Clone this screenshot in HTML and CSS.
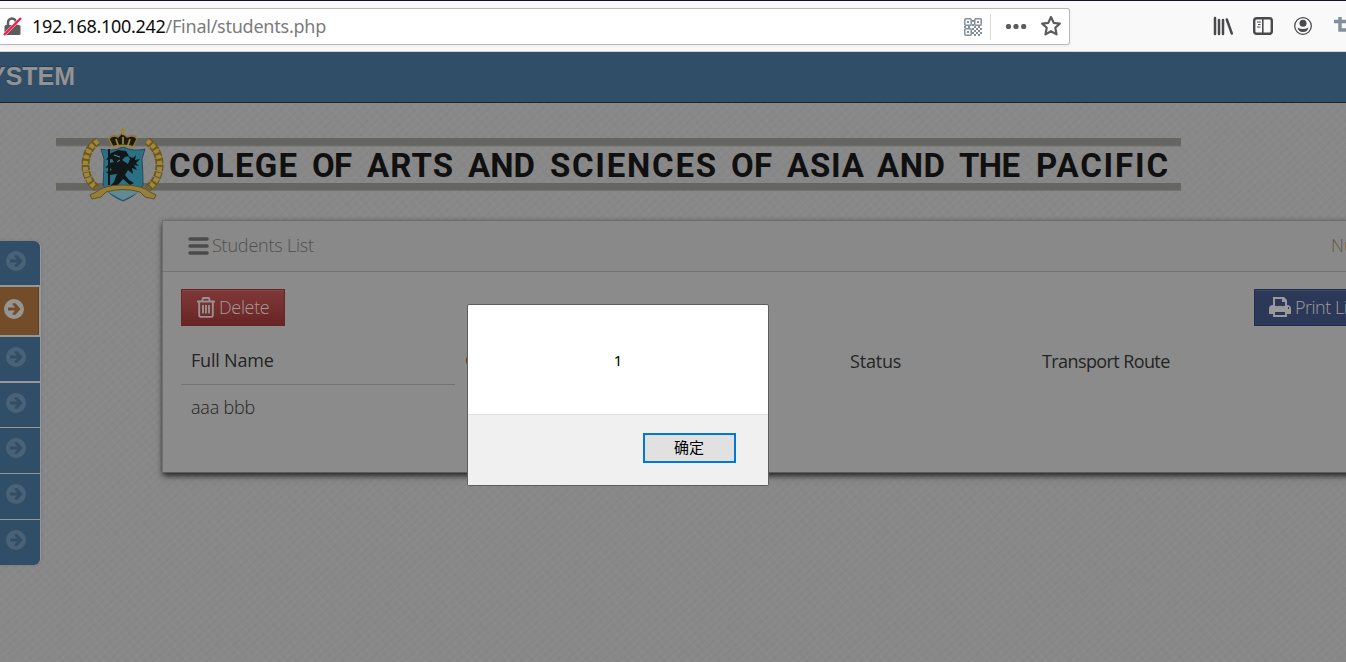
FILE: index.html
```html
<!DOCTYPE html>
<html lang="en">
<head>
<meta charset="utf-8">
<title>Students List</title>
<link rel="stylesheet" href="styles.css">
</head>
<body>
<svg class="defs" width="0" height="0">
  <symbol id="arrow" viewBox="0 0 20 20"><path fill-rule="evenodd" d="M10 0a10 10 0 1 0 0 20a10 10 0 0 0 0-20zM8.500 4.300h3l5 5.700l-5 5.700h-3v-1.200l2.600-3H4V8.500h7.100l-2.600-3z"/></symbol>
</svg>

<header class="chrome">
  <div class="urlbar">
    <svg class="lock" width="20" height="22" viewBox="0 0 20 22"><path d="M5 11V7.500a4 4 0 0 1 8 0V11" fill="none" stroke="#5c5c5e" stroke-width="2.500"/><rect x="1.500" y="10" width="16" height="10" rx="1.500" fill="#5c5c5e"/><path d="M1 20L18 3" stroke="#fff" stroke-width="3"/><path d="M1 20L18 3" stroke="#ff1744" stroke-width="2.300"/></svg>
    <span class="url"><b>192.168.100.242</b>/Final/students.php</span>
    <svg class="qr" width="18" height="18" viewBox="0 0 18 18"><g fill="none" stroke="#83909c" stroke-width="1.500"><rect x=".8" y=".8" width="6.400" height="6.400" rx="1"/><rect x="10.800" y=".8" width="6.400" height="6.400" rx="1"/><rect x=".8" y="10.800" width="6.400" height="6.400" rx="1"/></g><path fill="#83909c" d="M3 3h2v2H3zM13 3h2v2h-2zM3 13h2v2H3zM8 2h2v2H8zM8 6h2v2H8zM0 8h2v2H0zM4 8h2v2H4zM10 8h2v2h-2zM14 8h2v2h-2zM8 10h2v2H8zM12 10h2v2h-2zM16 10h2v2h-2zM10 12h2v2h-2zM14 12h2v2h-2zM8 14h2v2H8zM12 14h2v2h-2zM16 14h2v2h-2zM10 16h2v2h-2zM14 16h2v2h-2z"/></svg>
    <i class="sep"></i>
    <svg class="dots" width="22" height="6" viewBox="0 0 22 6"><g fill="#5c5c5e"><circle cx="3.500" cy="2.500" r="2.600"/><circle cx="11" cy="2.500" r="2.600"/><circle cx="18.700" cy="2.500" r="2.600"/></g></svg>
    <svg class="star" width="20" height="20" viewBox="0 0 20 20"><path d="M10 1l2.700 5.900 6.100.7-4.500 4.200 1.200 6.600L10 15.200l-5.500 3.200 1.200-6.600L1.200 7.600l6.100-.7z" fill="none" stroke="#5c5c5e" stroke-width="2.200" stroke-linejoin="round"/></svg>
  </div>
  <div class="tools">
    <svg width="20" height="20" viewBox="0 0 20 20"><g stroke="#4a4a4c" stroke-linecap="round"><path d="M2 2v16M6 4v14M10 4v14" stroke-width="2.500"/><path d="M13.800 3.500l5 14" stroke-width="2.500"/></g></svg>
    <svg width="20" height="18" viewBox="0 0 20 18"><rect x="1.200" y="1.200" width="17.600" height="15.600" rx="2.500" fill="none" stroke="#4a4a4c" stroke-width="2.400"/><path d="M9.800 1v16" stroke="#4a4a4c" stroke-width="1.600"/><path d="M4 5h4M5 7.500h2.500M4 10h3.500" stroke="#4a4a4c"/></svg>
    <svg width="20" height="20" viewBox="0 0 20 20"><circle cx="10" cy="10" r="8.300" fill="none" stroke="#4a4a4c" stroke-width="1.300"/><circle cx="10" cy="7.300" r="3.500" fill="#4a4a4c"/><path d="M4.500 11.500q5.500 3 11 0q-1 4.500-5.500 4.500t-5.500-4.500" fill="#4a4a4c"/></svg>
    <svg width="20" height="20" viewBox="0 0 20 20"><path d="M1 5.500h14v14M7 1v13h13" fill="none" stroke="#83909c" stroke-width="3.500"/></svg>
  </div>
</header>

<div class="page">
  <nav class="navbar">YSTEM</nav>
  <svg class="banner" width="1126" height="76" viewBox="56 127 1126 76">
    <path d="M56 138h1125v8H56zM56 183h1125v8H56z" fill="#656562"/>
    <path d="M56 145.500h1125v1H56zM56 190h1125v1H56z" fill="#73736f"/>
    <g fill="none" stroke="#6d571b" stroke-width="8"><path stroke-dasharray="6 1" d="M98 141C82 151 81 177 97 188"/><path stroke-dasharray="6 1" d="M147 141C163 151 164 177 148 188"/></g>
    <g fill="none" stroke="#a1873b" stroke-width="5" stroke-dasharray="4 2"><path d="M98 141C82 151 81 177 96 188"/><path d="M147 141C163 151 164 177 149 188"/></g>
    <path d="M101 149q11 3 22-2q11 5 22 2l-3 10q1 12 1 26q-5 10-20 16q-15-6-20-16q1-14 1-26z" fill="#2b7185" stroke="#28495a"/>
    <path d="M112 188h22l5 4-16 8-15-8z" fill="#638896"/>
    <path d="M108 149h2v36h-2zM111 153l7-3 8 1 3 5-4 1-3 3 6 4 2-5-2-3 5 2 3-3-1 5 5-1-4 4 3 3-5-1 3 5-5-2 1 6-5-4-3 5 4 5 5 3-4 2-7-6-6 7-8 1 5-5 3-8-7 1-4-3 6-2-3-3-4 1 5-5 4-1-2-3-6 1z" fill="#121719"/>
    <path d="M114 155l6 2M120 160l-3 2" stroke="#618b98"/>
    <path d="M96 192q8-7 27-7t27 7l6 3-2 4-9-2-5-5q-17-5-34 0l-5 5-9 2-2-4z" fill="#94803a" stroke="#65501b"/>
    <path d="M109 139q3-5 9-2l4-4 5 4q8-3 10 2l-4 8q-11-3-20 0z" fill="#1d1a13" stroke="#8f7635" stroke-width="1.500"/><path d="M123 127v8M120 130h6M116 139l2 6M123 137v7M130 139l-2 6M111 147q12-3 23 0" stroke="#9a8342" stroke-width="1.800" fill="none"/>
    <g class="college">
      <text x="169" y="177" textLength="128">COLEGE</text><text x="312" y="177" textLength="40">OF</text><text x="367" y="177" textLength="86">ARTS</text><text x="468" y="177" textLength="67">AND</text><text x="550" y="177" textLength="166">SCIENCES</text><text x="731" y="177" textLength="41">OF</text><text x="787" y="177" textLength="77">ASIA</text><text x="877" y="177" textLength="68">AND</text><text x="959" y="177" textLength="61">THE</text><text x="1036" y="177" textLength="132">PACIFIC</text>
    </g>
  </svg>
  <div class="content">
    <aside class="side">
      <div class="tab first"><svg class="go"><use href="#arrow"/></svg></div>
      <div class="tab active"><svg class="go"><use href="#arrow"/></svg></div>
      <div class="tab"><svg class="go"><use href="#arrow"/></svg></div>
      <div class="tab thin"><svg class="go"><use href="#arrow"/></svg></div>
      <div class="tab thin tall"><svg class="go"><use href="#arrow"/></svg></div>
      <div class="tab thin tall"><svg class="go"><use href="#arrow"/></svg></div>
      <div class="tab last"><svg class="go"><use href="#arrow"/></svg></div>
    </aside>
    <main class="panel">
      <div class="panel-head">
        <svg width="21" height="18" viewBox="0 0 21 18"><path d="M2 2h17M2 9h17M2 16h17" stroke="#4b4b4b" stroke-width="3.500" stroke-linecap="round"/></svg>
        <span class="title">Students List</span>
        <span class="count">Nu</span>
      </div>
      <div class="actions">
        <button class="btn red"><svg width="18" height="21" viewBox="0 0 18 21"><path d="M0 4.500h18M5 4l1.200-3h5.600L13 4M2.200 5v13.500q0 1.400 1.500 1.400h10.600q1.500 0 1.500-1.400V5M6 8v8.500M9 8v8.500M12 8v8.500" fill="none" stroke="#979191" stroke-width="1.900"/></svg><span class="del">Delete</span></button>
        <button class="btn blue"><svg width="22" height="20" viewBox="0 0 22 20"><path fill-rule="evenodd" fill="#9a9a9c" d="M4 0h11l3 3v5q4 0 4 4v5h-4v3H4v-3H0v-5q0-4 4-4zM6 2v7h10V5h-3V2zM6 15v3h10v-3zM19 10v2h1v-2z"/></svg><span class="print">Print List</span></button>
      </div>
      <div class="table">
        <div class="col name"><div class="th">Full Name</div><div class="td">aaa bbb</div></div>
        <div class="col gender"><div class="th">C</div></div>
        <div class="col status"><div class="th">Status</div></div>
        <div class="col route"><div class="th">Transport Route</div></div>
      </div>
    </main>
  </div>
</div>

<div class="dialog" role="alertdialog">
  <div class="message">1</div>
  <div class="dialog-foot"><button class="ok">确定</button></div>
</div>
</body>
</html>
```
FILE: styles.css
```css
* { box-sizing: border-box; }
html, body { margin: 0; width: 1346px; height: 662px; overflow: hidden; }
body { display: flex; flex-direction: column; position: relative; font-family: "Open Sans", "Noto Sans", sans-serif; }
svg { display: block; flex: none; }
button { font: inherit; margin: 0; }
.defs { position: absolute; }

.chrome { height: 52px; flex: none; display: flex; align-items: flex-start; background: #f9f9fa; border-top: 1px solid #12122b; border-bottom: 1px solid #d6d6d8; padding-top: 7px; }
.urlbar { width: 1070px; height: 37px; flex: none; display: flex; align-items: center; background: #fff; border: 1px solid #b9b9bb; border-left: 0; border-radius: 0 3px 3px 0; box-shadow: 0 1px 4px rgba(0,0,0,.06); }
.lock { margin: 0 9px 2px 3px; }
.url { flex: 1; font-family: "Noto Sans", sans-serif; font-size: 18px; line-height: 34px; color: #7b7b7d; white-space: nowrap; letter-spacing: -.24px; padding-bottom: 2px; }
.url b { font-weight: 400; color: #0c0c0d; letter-spacing: -.3px; }
.sep { width: 1px; height: 26px; margin: 0 14px 0 8px; background: #d9d9db; }
.dots { margin-right: 14px; }
.star { margin: 0 8px 1px 0; }
.tools { display: flex; align-items: center; gap: 20px; height: 35px; margin-left: 143px; }

.page { flex: 1; overflow: hidden; background-color: #888;
  background-image: repeating-linear-gradient(48deg, rgba(255,255,255,.018) 0 1px, transparent 3px 7px), repeating-linear-gradient(-42deg, rgba(0,0,0,.018) 0 1px, transparent 3px 6px); }
.navbar { height: 51px; background: #304e67; border-bottom: 1px solid #202326; color: #929394; font: bold 25px/49px "Liberation Sans", Arial, sans-serif; text-shadow: 0 -1px 0 rgba(0,0,0,.25); text-indent: -11px; }
.banner { margin: 24px 0 0 56px; }
.college { font: bold 33px "Roboto", sans-serif; fill: #101010; }

.content { display: flex; align-items: flex-start; }
.side { width: 41px; flex: none; margin-top: 38px; background: #979797; border-radius: 0 6px 6px 0; box-shadow: 0 0 3px rgba(0,0,0,.15); padding-right: 1px; }
.tab { height: 44px; margin-bottom: 2px; background: #304e67; padding: 10px 0 0 6px; }
.go { width: 20px; height: 20px; fill: #496278; }
.tab.first { border-radius: 0 6px 0 0; }
.tab.active { height: 48px; width: 39px; background: #734d29; border-right: 1px solid #5e4023; padding: 12px 0 0 4px; }
.active .go { fill: #979592; }
.tab.thin { height: 44px; margin-bottom: 1px; }
.tab.tall { height: 45px; }
.tab.last { height: 45px; margin-bottom: 0; border-radius: 0 0 6px 0; }

.panel { width: 1220px; height: 253px; flex: none; margin: 17px 0 0 121px; background: #8b8b8b; border: 1px solid #6f6f6f; border-bottom-color: #5c5c5c; box-shadow: 0 4px 6px -1px rgba(0,0,0,.7), 0 0 4px rgba(0,0,0,.2); color: #242424; }
.panel-head { height: 51px; display: flex; align-items: center; border-bottom: 1px solid #747474; padding-left: 25px; background: #898989; font-size: 18px; font-weight: 300; color: #505050; }
.title { margin: -2px 0 0 3px; width: 1119px; flex: none; letter-spacing: -.2px; }
.count { color: #67573e; margin-top: -2px; }
.actions { display: flex; justify-content: space-between; padding: 17px 0 0 18px; width: 1211px; }
.btn { height: 37px; display: flex; align-items: center; padding: 0 0 1px 15px; gap: 4px; border-radius: 0; font-size: 18px; font-weight: 300; color: #a29b9b; white-space: nowrap; }
.red { width: 104px; border: 1px solid #662525; background: linear-gradient(#803838, #682525); box-shadow: inset 0 1px #8a4747; letter-spacing: -.35px; }
.blue { width: 120px; border: 1px solid #222e50; background: #2c3858; box-shadow: inset 0 1px #3e4966; padding-left: 14px; letter-spacing: -.5px; }
.table { display: flex; padding-left: 18px; }
.col { flex: none; font-size: 18px; line-height: 24px; white-space: nowrap; }
.th { height: 59px; padding: 22px 10px 0; font-weight: 400; letter-spacing: -.2px; }
.td { padding: 10px 10px 0; font-weight: 300; letter-spacing: -.2px; }
.name { width: 274px; }
.name .th { border-bottom: 1px solid #737373; }
.gender { width: 385px; }
.gender .th { color: #5a371c; }
.status { width: 192px; }
.status .th, .route .th { padding-top: 23px; }
.route .th { letter-spacing: -.6px; }

.dialog { position: absolute; left: 467px; top: 304px; width: 302px; height: 182px; border: 1px solid #5e5e5e; border-radius: 2px; background: #fff; display: flex; flex-direction: column; overflow: hidden; color: #000; font-family: "Noto Sans", "Noto Sans CJK SC", sans-serif; }
.message { height: 109px; line-height: 111px; text-align: center; font-size: 15px; }
.dialog-foot { flex: 1; background: #f0f0f0; border-top: 1px solid #dfdfdf; display: flex; justify-content: flex-end; padding: 18px 32px 0 0; }
.ok { width: 93px; height: 30px; border: 2px solid #0078d7; background: #e1e1e1; padding: 0 1px 2px 0; font: 15px/24px "Noto Sans CJK SC", sans-serif; color: #000; }
```
